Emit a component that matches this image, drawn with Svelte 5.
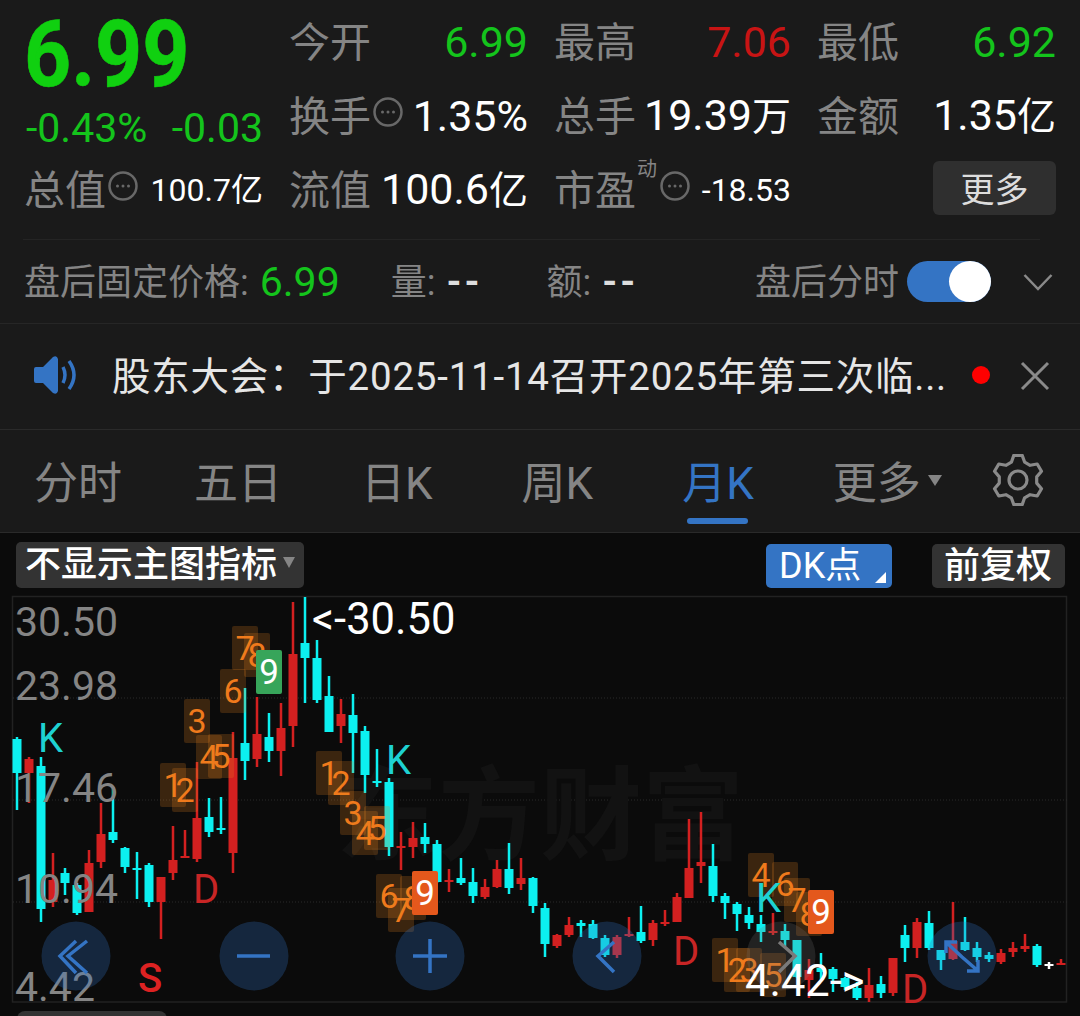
<script>
  const candles = [
    [17,737,810,739,773,'c'],[29,757,803,759,773,'r'],[41,757,922,766,909,'c'],[53,853,907,880,902,'r'],
    [65,868,895,873,883,'c'],[77,883,915,885,913,'c'],[89,850,912,863,912,'r'],[101,803,868,834,862,'r'],
    [113,787,843,832,840,'c'],[125,847,873,848,867,'c'],[137,852,899,868,870,'c'],[149,863,907,865,902,'c'],
    [161,877,939,877,902,'r'],[173,826,880,860,873,'r'],[185,830,858,856,858,'r'],[197,762,862,818,859,'r'],
    [209,798,837,817,832,'c'],[221,797,834,828,830,'c'],[233,732,873,758,853,'r'],[245,688,780,743,761,'c'],
    [257,697,767,734,759,'r'],[269,713,762,737,751,'c'],[281,703,776,728,751,'r'],[293,602,747,654,726,'r'],
    [305,597,703,643,658,'c'],[317,640,703,658,700,'c'],[329,676,732,696,732,'c'],[341,699,743,714,726,'r'],
    [353,694,773,715,733,'c'],[365,726,793,731,775,'c'],[377,749,787,781,783,'c'],[389,778,856,782,847,'c'],
    [401,832,870,846,848,'r'],[413,822,858,838,847,'r'],[425,823,853,837,844,'c'],[437,840,883,844,882,'c'],
    [449,869,892,880,882,'r'],[461,858,885,878,883,'c'],[473,868,903,882,896,'c'],[485,879,899,887,897,'r'],
    [497,860,888,869,887,'r'],[509,843,894,869,888,'c'],[521,858,890,878,884,'r'],[533,877,913,878,906,'c'],
    [545,903,957,908,944,'c'],[557,934,948,935,946,'r'],[569,917,937,925,935,'r'],[581,920,937,923,926,'c'],
    [593,920,939,924,938,'c'],[605,935,957,938,955,'c'],[617,935,958,937,955,'r'],[629,917,937,934,936,'r'],
    [641,906,943,932,941,'c'],[653,920,946,923,940,'r'],[665,910,926,922,924,'r'],[677,893,922,897,922,'r'],
    [689,819,898,868,898,'r'],[701,812,883,862,866,'r'],[713,844,902,866,896,'c'],[725,893,919,896,903,'c'],
    [737,902,931,904,914,'c'],[749,907,929,915,923,'c'],[761,915,942,924,932,'c'],[773,913,935,931,933,'r'],
    [785,924,946,931,940,'c'],[797,940,978,940,977,'c'],[809,959,998,970,980,'r'],[821,953,980,968,972,'c'],
    [833,967,992,969,979,'c'],[845,977,990,978,987,'c'],[857,982,1000,988,998,'c'],[869,968,1002,985,998,'r'],
    [881,976,998,984,993,'c'],[893,958,996,958,993,'r'],[905,925,962,935,948,'c'],[917,918,958,922,948,'r'],
    [929,911,950,923,948,'c'],[941,950,970,950,960,'c'],[953,902,960,941,959,'r'],[965,917,951,942,950,'c'],
    [977,942,962,948,957,'c'],[989,952,962,955,959,'c'],[1001,949,964,953,962,'r'],[1013,942,957,948,952,'r'],
    [1025,934,952,946,949,'r'],[1037,944,967,946,965,'c'],[1049,962,969,964,966,'w'],[1061,959,965,963,965,'r']
  ];
  const marks = [
    [173,785,'1'],[185,790,'2'],[197,721,'3'],[209,757,'4'],[221,756,'5'],[233,691,'6'],[245,648,'7'],[257,655,'8'],
    [329,773,'1'],[341,783,'2'],[353,813,'3'],[365,833,'4'],[377,828,'5'],[389,896,'6'],[401,910,'7'],[413,898,'8'],
    [725,960,'1'],[737,970,'2'],[749,970,'3'],[761,875,'4'],[773,975,'5'],[785,884,'6'],[797,900,'7'],[809,914,'8']
  ];
  const nines = [[269,672,'g'],[425,893,'o'],[821,912,'o']];
  const axis = [[15,636,'30.50'],[15,700,'23.98'],[15,802,'17.46'],[15,903,'10.94'],[15,1001,'4.42']];
  const letters = [
    [38,752,'K','lc'],[386,774,'K','lc'],[756,912,'K','lc'],
    [193,903,'D','lr'],[673,965,'D','lr'],[902,1003,'D','lr'],[138,992,'S','ls']
  ];
  const teeth = [];
  for (let k = 0; k < 6; k++) {
    const a = (-90 + k * 60) * Math.PI / 180;
    const pts = [[-0.17,25],[0.17,25],[0.36,19],[0.69,19]];
    for (const [d, r] of pts) {
      teeth.push((26 + r * Math.cos(a + d)).toFixed(1) + ' ' + (26 + r * Math.sin(a + d)).toFixed(1));
    }
  }
  const gear = 'M' + teeth.join('L') + 'Z';
</script>

{#snippet info()}
  <svg class="info" viewBox="0 0 30 30"><circle cx="15" cy="15" r="13.5" /><circle class="dot" cx="9.5" cy="15" r="1.5" /><circle class="dot" cx="15" cy="15" r="1.5" /><circle class="dot" cx="20.5" cy="15" r="1.5" /></svg>
{/snippet}

<div class="page">
  <section class="stats">
    <div class="hero">
      <div class="price">6.99</div>
      <div class="deltas"><span>-0.43%</span><span>-0.03</span></div>
    </div>
    <div class="cell"><span class="lb">今开</span><span class="val green">6.99</span></div>
    <div class="cell"><span class="lb">最高</span><span class="val red">7.06</span></div>
    <div class="cell"><span class="lb">最低</span><span class="val green">6.92</span></div>

    <div class="cell"><span class="lb withicon">换手{@render info()}</span><span class="val">1.35%</span></div>
    <div class="cell"><span class="lb">总手</span><span class="val">19.39<small>万</small></span></div>
    <div class="cell"><span class="lb">金额</span><span class="val">1.35<small>亿</small></span></div>

    <div class="cell"><span class="lb withicon">总值{@render info()}</span><span class="val mini">100.7亿</span></div>
    <div class="cell"><span class="lb">流值</span><span class="val">100.6<small>亿</small></span></div>
    <div class="cell"><span class="lb withicon">市盈<sup>动</sup>{@render info()}</span><span class="val mini">-18.53</span></div>
    <div class="cell end"><button class="more">更多</button></div>
  </section>

  <hr class="rule first" />

  <section class="after">
    <span class="af-lb">盘后固定价格:</span><span class="af-price">6.99</span>
    <span class="af-lb vol">量:</span><span class="dash">--</span>
    <span class="af-lb amt">额:</span><span class="dash">--</span>
    <span class="af-lb swlabel">盘后分时</span>
    <span class="switch"><span class="knob"></span></span>
    <svg class="chev" viewBox="0 0 30 18"><path d="M1.5 2 L15 16 L28.5 2" /></svg>
  </section>

  <section class="notice">
    <svg class="speaker" viewBox="0 0 44 38">
      <path class="spk" d="M0 13 Q0 11 2 11 L9 11 L19 1 Q23 -1 24 3 L24 35 Q23 39 19 37 L9 27 L2 27 Q0 27 0 25 Z" />
      <path class="wave" d="M29 11 Q33 19 29 27" />
      <path class="wave" d="M35 5 Q45 19 35 33" />
    </svg>
    <span class="ntext">股东大会：于2025-11-14召开2025年第三次临...</span>
    <span class="reddot"></span>
    <svg class="close" viewBox="0 0 30 30"><path d="M2 2 L28 28 M28 2 L2 28" /></svg>
  </section>

  <nav class="tabs">
    <span class="tab t1">分时</span>
    <span class="tab t2">五日</span>
    <span class="tab t3">日K</span>
    <span class="tab t4">周K</span>
    <span class="tab t5 active">月K</span>
    <span class="tab t6">更多<i class="tri"></i></span>
    <svg class="gear" viewBox="0 0 52 52"><path d={gear} /><circle cx="26" cy="26" r="9" /></svg>
  </nav>

  <section class="main">
    <div class="tools">
      <span class="chip ind">不显示主图指标<i class="tri small"></i></span>
      <span class="chip dk">DK点<i class="corner"></i></span>
      <span class="chip fq">前复权</span>
    </div>
    <svg class="chart" viewBox="0 596 1080 416" width="1080" height="416">
      <rect class="frame" x="12.5" y="596.5" width="1054" height="405.5" />
      <line class="grid" x1="13" x2="1067" y1="698" y2="698" />
      <line class="grid" x1="13" x2="1067" y1="800" y2="800" />
      <line class="grid" x1="13" x2="1067" y1="902" y2="902" />
      <text class="wm" x="336" y="852">东方财富</text>

      {#each candles as [x, wt, wb, bt, bb, c]}
        <g class={c}>
          <rect x={x - 1.25} y={wt} width="2.5" height={wb - wt} />
          <rect x={x - 4.5} y={bt} width="9" height={Math.max(bb - bt, 2)} />
        </g>
      {/each}

      {#each axis as [x, y, t]}
        <text class="axis" {x} {y}>{t}</text>
      {/each}

      {#each marks as [x, y, t]}
        <rect class="mbox" x={x - 13} y={y - 22} width="26" height="44" rx="2" />
        <text class="mnum" {x} y={y + 12}>{t}</text>
      {/each}
      {#each nines as [x, y, k]}
        <rect class={k === 'g' ? 'nbox ng' : 'nbox no'} x={x - 13} y={y - 22} width="26" height="44" rx="2" />
        <text class="nnum" {x} y={y + 12}>9</text>
      {/each}

      {#each letters as [x, y, t, k]}
        <text class={k} {x} {y}>{t}</text>
      {/each}

      <g class="btn"><circle cx="76" cy="956" r="34.5" /><path d="M87 941 L68 956 L87 973 M76 941 L60 956 L76 973" /></g>
      <g class="btn"><circle cx="254" cy="956" r="34.5" /><path d="M237 956 H270" /></g>
      <g class="btn"><circle cx="430" cy="956" r="34.5" /><path d="M413 956 H447 M430 939 V973" /></g>
      <g class="btn"><circle cx="607" cy="956" r="34.5" /><path d="M614 942 L598 956 L614 972" /></g>
      <g class="btn off"><circle cx="781" cy="956" r="34.5" /><path d="M779 942 L795 956 L779 972" /></g>
      <g class="btn"><circle cx="962" cy="956" r="34.5" /><path d="M946 953 V942 H957 M947 943 L962 957 M978 960 V971 H967 M977 970 L962 957" /></g>

      <text class="hi" x="312" y="634">&lt;-30.50</text>
      <text class="hi" x="745" y="996">4.42-&gt;</text>
    </svg>
    <div class="sliver"></div>
  </section>
</div>

<style>
  :global(body) { margin: 0; background: #1a1a1a; }
  .page {
    width: 1080px; height: 1016px; overflow: hidden; background: #1a1a1a;
    font-family: Roboto, "Noto Sans CJK SC", sans-serif;
  }
  .stats {
    display: grid;
    grid-template-columns: 238px 238px 236px 238px;
    grid-template-rows: repeat(3, 74px);
    column-gap: 27px;
    padding: 5px 0 0 24px;
    box-sizing: border-box;
    height: 239px;
    width: 1080px;
  }
  .hero { grid-row: 1 / span 2; grid-column: 1; display: flex; flex-direction: column; padding-left: 2px; margin-right: -1px; }
  .price {
    font-size: 92px; font-weight: 700; line-height: 96px; height: 96px; margin-top: 2px; color: #10d010;
    transform: scaleX(.895); transform-origin: left center; margin-left: -2px; -webkit-text-stroke: .6px #10d010;
  }
  .deltas { display: flex; justify-content: space-between; color: #14c41c; font-size: 41px; line-height: 44px; margin-top: 3px; }
  .cell { display: flex; align-items: center; justify-content: space-between; white-space: nowrap; }
  .cell.end { justify-content: flex-end; }
  .lb { font-size: 41px; color: #858585; font-family: "Noto Sans CJK SC", sans-serif; line-height: 74px; display: flex; align-items: center; position: relative; margin-top: -6px; }
  .val { font-size: 43px; line-height: 50px; color: #fff; margin-right: -1px; }
  .val small { font-size: 39px; }
  .val.mini { font-size: 32px; }
  .green { color: #14c41c; }
  .red { color: #c81414; }
  .info { width: 30px; height: 30px; fill: none; stroke: #686868; stroke-width: 2.5; margin: -3px 0 0 2px; }
  .info .dot { fill: #686868; stroke: none; }
  sup { font-size: 20px; line-height: 20px; margin: -38px 1px 0 1px; color: #858585; }
  .more {
    display: block; width: 123px; height: 54px; margin: -4px -1px 0 0; border: 0; border-radius: 6px; background: #2f2f2f; color: #ddd;
    font: 34px/54px "Noto Sans CJK SC", sans-serif; padding: 0;
  }
  hr.rule { display: block; border: 0; height: 1px; background: #242424; margin: 0 40px 0 23px; }
  .after {
    height: 84px; padding-left: 24px; display: flex; align-items: center; white-space: nowrap; box-sizing: border-box;
    border-bottom: 1px solid #262626;
  }
  .af-lb { font-size: 36px; line-height: 44px; color: #858585; margin-top: 3px; font-family: Roboto, "Noto Sans CJK SC", sans-serif; }
  .af-price { font-size: 41px; color: #14c41c; margin-left: 11px; width: 78px; }
  .vol { margin-left: 53px; }
  .dash { font-size: 38px; color: #ddd; font-weight: 700; margin-left: 11px; letter-spacing: 3px; width: 100px; }
  .dash:last-of-type { width: auto; }
  .amt { margin-left: 0; }
  .swlabel { margin-left: auto; }
  .switch { width: 84px; height: 41px; border-radius: 21px; background: #3474c4; margin-left: 8px; display: flex; justify-content: flex-end; }
  .knob { width: 42px; height: 41px; border-radius: 50%; background: #fff; }
  .chev { width: 30px; height: 18px; fill: none; stroke: #8a8a8a; stroke-width: 2.5; margin: 0 27px 0 32px; }
  .notice {
    height: 106px; display: flex; align-items: center; padding-left: 34px; box-sizing: border-box;
    border-bottom: 1px solid #2a2a2a;
  }
  .speaker { width: 44px; height: 38px; flex: none; margin-top: -4px; }
  .spk { fill: #3474c4; }
  .wave { fill: none; stroke: #3474c4; stroke-width: 3.5; }
  .ntext { font-size: 38.5px; line-height: 48px; letter-spacing: .77px; color: #e6e6e6; margin: 0 0 0 34px; white-space: nowrap; width: 861px; flex: none; }
  .reddot { width: 18px; height: 18px; border-radius: 50%; background: #f00; margin: -4px 0 0 -1px; flex: none; }
  .close { width: 30px; height: 30px; fill: none; stroke: #8a8a8a; stroke-width: 3; margin: -2px 0 0 30px; flex: none; }
  .tabs { height: 103px; position: relative; display: flex; align-items: flex-start; box-sizing: border-box; border-bottom: 1px solid #2a2a2a; }
  .tab { font-size: 44px; line-height: 50px; color: #858585; margin-top: 29px; position: relative; white-space: nowrap; font-family: Roboto, "Noto Sans CJK SC", sans-serif; }
  .t1 { margin-left: 34px; }
  .t2 { margin-left: 72px; }
  .t3 { margin-left: 79px; }
  .t4 { margin-left: 89px; }
  .t5 { margin-left: 89px; }
  .t6 { margin-left: 79px; display: flex; align-items: center; }
  .active { color: #3474c4; }
  .active::after { content: ""; position: absolute; left: 5px; right: 6px; top: 59px; height: 6px; border-radius: 3px; background: #3474c4; }
  .tri { display: inline-block; border-left: 7px solid transparent; border-right: 7px solid transparent; border-top: 11px solid #858585; margin: -8px 0 0 7px; }
  .tri.small { border-left-width: 6px; border-right-width: 6px; margin: -6px 0 0 6px; }
  .gear { width: 52px; height: 52px; position: absolute; left: 992px; top: 24px; fill: none; stroke: #8a8a8a; stroke-width: 3.2; stroke-linejoin: round; }
  .main { background: #0b0b0b; height: 483px; overflow: hidden; }
  .tools { height: 63px; display: flex; align-items: flex-start; padding: 9px 15px 0 16px; box-sizing: border-box; }
  .chip { font-size: 36px; font-weight: 500; line-height: 46px; color: #fff; display: flex; align-items: center; box-sizing: border-box; border-radius: 5px; background: #333; white-space: nowrap; }
  .ind { width: 288px; padding-left: 9px; height: 46px; }
  .dk { width: 126px; height: 44px; margin: 2px 0 0 auto; background: #3474c4; padding-left: 13px; position: relative; font-weight: 400; }
  .corner { position: absolute; right: 6px; bottom: 5px; width: 0; height: 0; border-left: 11px solid transparent; border-bottom: 11px solid #fff; }
  .fq { width: 133px; height: 44px; margin: 2px 0 0 40px; padding-left: 12px; }
  .chart { display: block; overflow: visible; }
  .frame { fill: none; stroke: #222; stroke-width: 1.5; }
  .grid { stroke: #2a2a2a; stroke-width: 1; stroke-dasharray: 1 2; }
  .wm { font-size: 102px; font-weight: 700; fill: #121212; font-family: "Noto Sans CJK SC", sans-serif; }
  .r { fill: #d32020; }
  .c { fill: #0cf0f0; }
  .w { fill: #fff; }
  .axis { font-size: 41px; fill: #858585; }
  .hi { font-size: 43.5px; fill: #fff; }
  .mbox { fill: rgba(230, 130, 30, .22); }
  .mnum { font-size: 34px; fill: #f07a1c; text-anchor: middle; }
  .nbox.ng { fill: #37a55a; }
  .nbox.no { fill: #e4581c; }
  .nnum { font-size: 35px; fill: #fff; text-anchor: middle; }
  .lc { font-size: 40px; fill: #1ed2d2; }
  .lr { font-size: 40px; fill: #c82525; }
  .ls { font-size: 40px; fill: #d22; font-weight: 500; }
  .btn circle { fill: rgba(52, 116, 196, .28); }
  .btn path { fill: none; stroke: #3474c4; stroke-width: 3.5; }
  .btn.off circle { fill: rgba(120, 120, 120, .22); }
  .btn.off path { stroke: #7a7a7a; }
  .sliver { width: 150px; height: 8px; margin: -1px 0 0 17px; background: #333; border-radius: 8px 8px 0 0; }
</style>
